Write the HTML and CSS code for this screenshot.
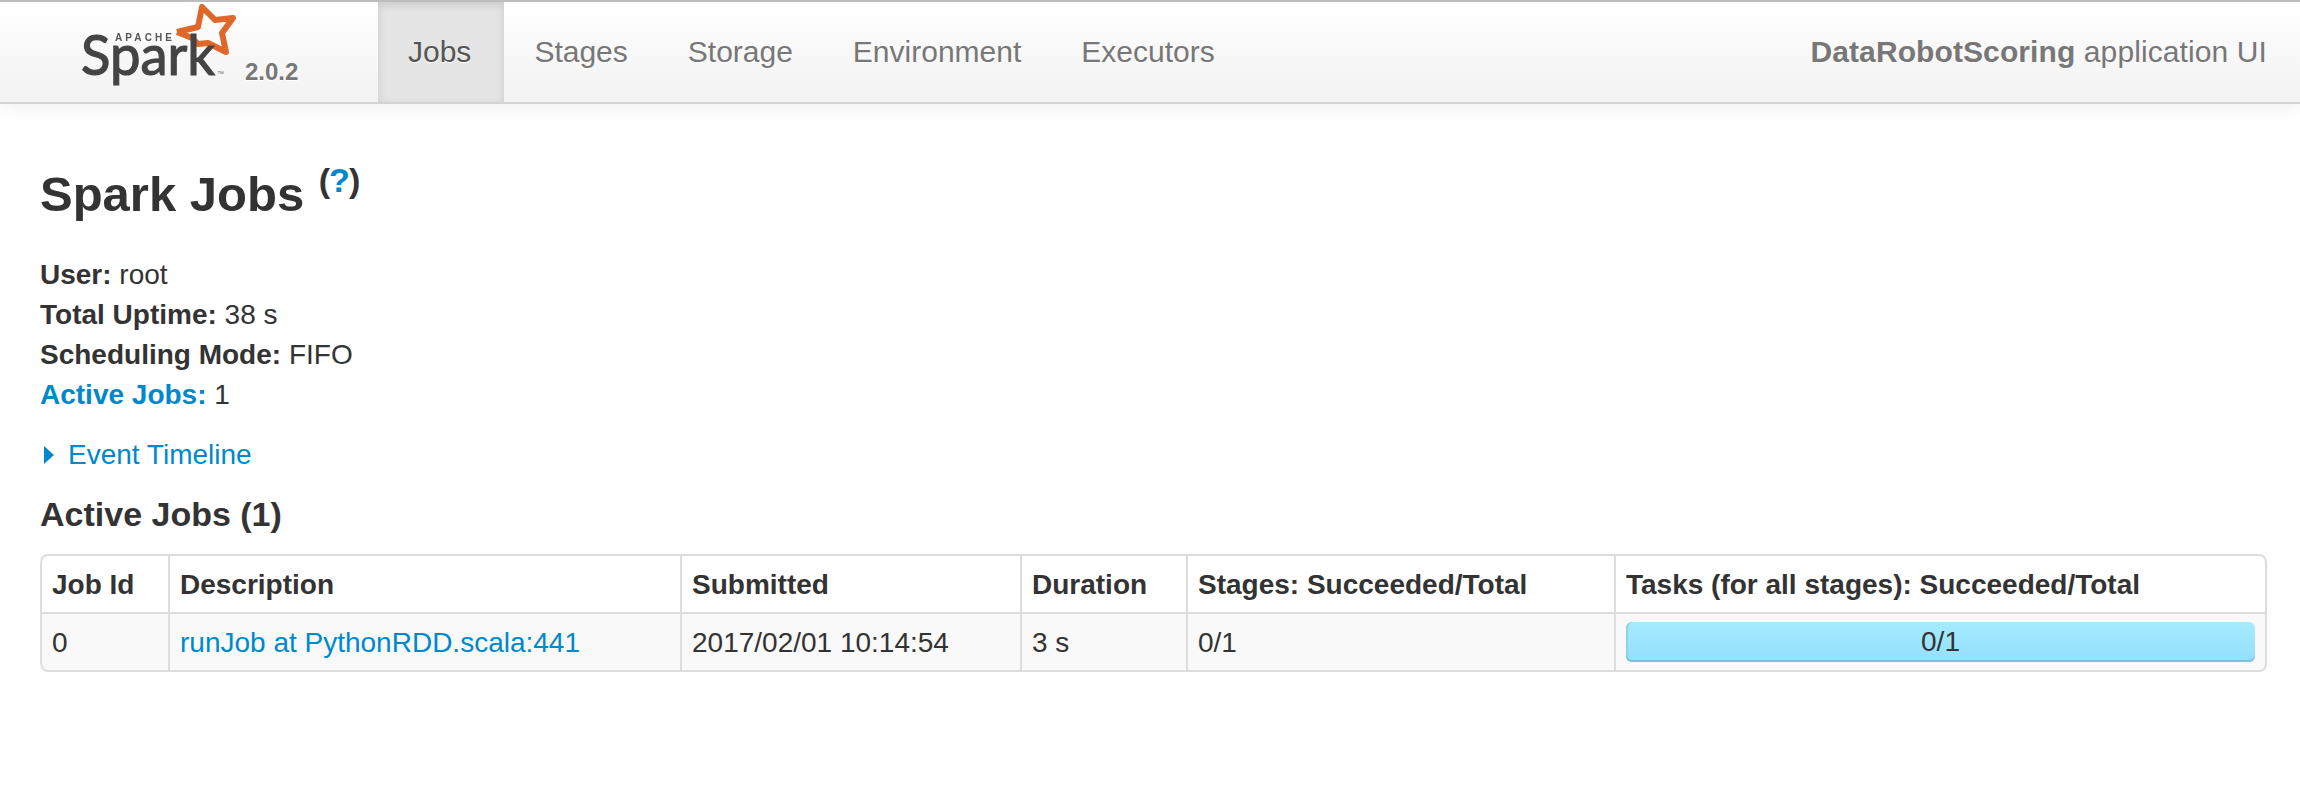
FILE: index.html
```html
<!DOCTYPE html>
<html lang="en">
<head>
  <meta charset="UTF-8">
  <title>DataRobotScoring - Spark Jobs</title>
  <link rel="stylesheet" href="styles.css">
</head>
<body>
  <header class="navbar">
    <a class="brand" href="#">
      <svg class="logo" width="178" height="100" viewBox="0 0 178 100">
        <polyline class="star" points="117,32 138,27 142,7 155,20 173,18 162,33 166,52 148,43 138,44 132,38 117,32"/>
        <text class="logo-apache" x="55" y="41" textLength="57">APACHE</text>
        <text class="logo-spark" x="21" y="75" textLength="134" lengthAdjust="spacingAndGlyphs">Spark</text>
        <text class="logo-tm" x="157" y="76">™</text>
      </svg>
      <span class="version">2.0.2</span>
    </a>
    <nav class="tabs">
      <a class="tab active" href="#">Jobs</a>
      <a class="tab" href="#">Stages</a>
      <a class="tab" href="#">Storage</a>
      <a class="tab" href="#">Environment</a>
      <a class="tab" href="#">Executors</a>
    </nav>
    <p class="app-name"><strong>DataRobotScoring</strong> application UI</p>
  </header>

  <main class="content">
    <h3 class="page-title">Spark Jobs <sup class="help">(<a href="#">?</a>)</sup></h3>

    <ul class="summary">
      <li><strong>User:</strong> root</li>
      <li><strong>Total Uptime:</strong> 38 s</li>
      <li><strong>Scheduling Mode:</strong> FIFO</li>
      <li><a href="#active"><strong>Active Jobs:</strong></a> 1</li>
    </ul>

    <a class="timeline-link" href="#"><span class="arrow-right"></span>Event Timeline</a>

    <h4 class="section-title" id="active">Active Jobs (1)</h4>

    <table class="jobs">
      <colgroup>
        <col class="col-id">
        <col class="col-desc">
        <col class="col-submitted">
        <col class="col-duration">
        <col class="col-stages">
        <col>
      </colgroup>
      <thead>
        <tr>
          <th>Job Id</th>
          <th>Description</th>
          <th>Submitted</th>
          <th>Duration</th>
          <th>Stages: Succeeded/Total</th>
          <th>Tasks (for all stages): Succeeded/Total</th>
        </tr>
      </thead>
      <tbody>
        <tr>
          <td>0</td>
          <td><a href="#">runJob at PythonRDD.scala:441</a></td>
          <td>2017/02/01 10:14:54</td>
          <td>3 s</td>
          <td>0/1</td>
          <td><div class="progress">0/1</div></td>
        </tr>
      </tbody>
    </table>
  </main>
</body>
</html>
```

FILE: styles.css
```css
body {
    margin: 0;
    background: #fff;
    font-family: "Liberation Sans", Arial, sans-serif;
    font-size: 28px;
    line-height: 40px;
    color: #333;
}
a {
    color: #0088cc;
    text-decoration: none;
}

/* top bar */
.navbar {
    display: flex;
    align-items: stretch;
    height: 100px;
    border-top: 2px solid #bdbdbd;
    border-bottom: 2px solid #d4d4d4;
    background: linear-gradient(to bottom, #ffffff, #f2f2f2);
    box-shadow: 0 2px 20px rgba(0, 0, 0, 0.07);
    font-size: 30px;
    padding-right: 33px;
}
.brand {
    display: flex;
    width: 378px;
    flex: none;
    padding-left: 60px;
    box-sizing: border-box;
}
.logo {
    flex: none;
    margin-top: -2px;
}
.star {
    fill: none;
    stroke: #e0672a;
    stroke-width: 6;
    stroke-linejoin: round;
    filter: blur(0.5px);
}
.logo-spark {
    font-family: Lato, "Liberation Sans", sans-serif;
    font-size: 56px;
    font-weight: 400;
    fill: #444;
    stroke: #444;
    stroke-width: 1.2;
    filter: blur(0.6px);
}
.logo-apache {
    font-family: "Liberation Sans", Arial, sans-serif;
    font-size: 10px;
    font-weight: bold;
    fill: #555;
    filter: blur(0.3px);
}
.logo-tm {
    font-family: "Liberation Sans", Arial, sans-serif;
    font-size: 7px;
    fill: #777;
}
.version {
    font-size: 24px;
    font-weight: bold;
    color: #777;
    line-height: 24px;
    margin: 58px 0 0 7px;
    text-shadow: 0 1px 0 #fff;
}
.tabs {
    display: flex;
}
.tab {
    display: block;
    padding: 0 30px;
    line-height: 100px;
    color: #777;
    text-shadow: 0 1px 0 #fff;
}
.tab.active {
    padding-right: 33px;
    color: #555;
    background: #e5e5e5;
    box-shadow: inset 0 3px 8px rgba(0, 0, 0, 0.125);
}
.app-name {
    margin: 0 0 0 auto;
    line-height: 100px;
    letter-spacing: 0.1px;
    color: #777;
    text-shadow: 0 1px 0 #fff;
}

/* page body */
.content {
    padding: 0 33px 0 40px;
}
.page-title {
    margin: 50px 0 21px;
    font-size: 49px;
    line-height: 80px;
    font-weight: bold;
}
.help {
    font-size: 34px;
    letter-spacing: -1px;
    line-height: 0;
    vertical-align: baseline;
    position: relative;
    top: -19px;
    margin-left: 1px;
}
.help a {
    font-weight: bold;
}
.summary {
    list-style: none;
    margin: 0 0 20px;
    padding: 0;
}
.timeline-link {
    display: flex;
    align-items: center;
}
.arrow-right {
    width: 0;
    height: 0;
    margin: 0 14px 0 4px;
    border-top: 9px solid transparent;
    border-bottom: 9px solid transparent;
    border-left: 10px solid #0088cc;
}
.section-title {
    margin: 19px 0 20px;
    font-size: 34px;
    line-height: 40px;
    font-weight: bold;
}

/* jobs table */
.jobs {
    width: 100%;
    table-layout: fixed;
    border-collapse: separate;
    border-spacing: 0;
    border: 2px solid #ddd;
    border-left-width: 0;
    border-radius: 8px;
}
.col-id { width: 128px; }
.col-desc { width: 512px; }
.col-submitted { width: 340px; }
.col-duration { width: 166px; }
.col-stages { width: 428px; }
.jobs th,
.jobs td {
    padding: 9px 10px 7px;
    text-align: left;
    border-left: 2px solid #ddd;
}
.jobs th {
    font-weight: bold;
    border-bottom: 2px solid #ddd;
    white-space: nowrap;
}
.jobs th:first-child {
    border-top-left-radius: 8px;
}
.jobs tbody tr {
    background: #f9f9f9;
}
.jobs td:first-child {
    border-bottom-left-radius: 8px;
}
.jobs td:last-child {
    border-bottom-right-radius: 8px;
    padding-top: 8px;
    padding-bottom: 8px;
}
.progress {
    height: 40px;
    text-align: center;
    border-radius: 6px;
    background: linear-gradient(to bottom, #a6ebff, #93dfff);
    box-shadow: inset 0 -2px 0 #7fbfdc, inset 2px 0 0 #8fd0ea;
}
```
